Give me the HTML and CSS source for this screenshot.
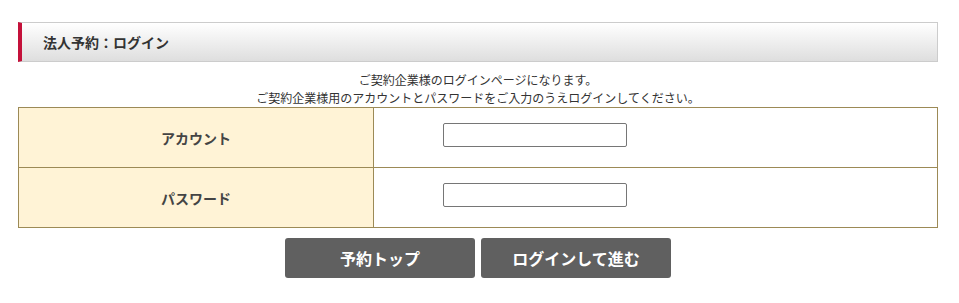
FILE: index.html
```html
<!DOCTYPE html>
<html lang="ja">
<head>
    <meta charset="UTF-8">
    <meta name="viewport" content="width=device-width, initial-scale=1.0">
    <title>法人予約：ログイン</title>
    <link rel="stylesheet" href="styles.css">
</head>
<body>
    <div class="wrap">
        <h1 class="page-title">法人予約：ログイン</h1>
        <p class="lead">
            ご契約企業様のログインページになります。<br>
            ご契約企業様用のアカウントとパスワードをご入力のうえログインしてください。
        </p>
        <form id="loginForm">
            <table class="login-table">
                <tr>
                    <th>アカウント</th>
                    <td><input type="text" id="account" name="account"></td>
                </tr>
                <tr>
                    <th>パスワード</th>
                    <td><input type="password" id="password" name="password"></td>
                </tr>
            </table>
            <div class="buttons">
                <button type="button" class="btn">予約トップ</button>
                <button type="submit" class="btn">ログインして進む</button>
            </div>
        </form>
    </div>
</body>
</html>
```

FILE: styles.css
```css
body {
    margin: 0;
    padding: 0;
    background: #fff;
    color: #333;
    font-family: "Noto Sans CJK JP", "Noto Sans", sans-serif;
}
.wrap {
    padding: 22px 21px 0 18px;
}
.page-title {
    margin: 0;
    height: 38px;
    line-height: 38px;
    padding-left: 21px;
    font-size: 14px;
    font-weight: bold;
    color: #333;
    border: 1px solid #ccc;
    border-left: 4px solid #c4113a;
    background: linear-gradient(to bottom, #ffffff, #dedede);
}
.lead {
    margin: 9px 0 0;
    font-size: 12px;
    line-height: 18px;
    text-align: center;
}
.login-table {
    width: 100%;
    border-collapse: collapse;
}
.login-table th,
.login-table td {
    height: 59px;
    border: 1px solid #9c8a56;
    padding: 0;
}
.login-table th {
    width: 354px;
    background: #fff3d6;
    font-size: 14px;
    font-weight: bold;
    color: #444;
}
.login-table td {
    padding-left: 69px;
}
.login-table input {
    display: block;
    width: 184px;
    height: 24px;
    margin-bottom: 5px;
    box-sizing: border-box;
    border: 1px solid #767676;
    border-radius: 2px;
    padding: 2px 4px;
    font-size: 13px;
}
.buttons {
    display: flex;
    justify-content: center;
    gap: 6px;
    margin-top: 10px;
}
.btn {
    width: 190px;
    height: 40px;
    border: none;
    border-radius: 3px;
    background: #606060;
    color: #fff;
    font-size: 16px;
    font-weight: bold;
    font-family: "Noto Sans CJK JP", "Noto Sans", sans-serif;
    cursor: pointer;
}
```
